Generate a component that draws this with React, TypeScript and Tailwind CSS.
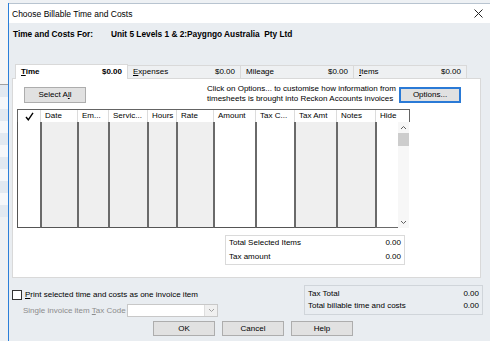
import React from "react";

const cols = [
  { label: "", w: 23, gray: false },
  { label: "Date", w: 37, gray: true },
  { label: "Em...", w: 31, gray: true },
  { label: "Servic...", w: 39, gray: true },
  { label: "Hours", w: 29, gray: true },
  { label: "Rate", w: 37, gray: true },
  { label: "Amount", w: 42, gray: false },
  { label: "Tax C...", w: 39, gray: false },
  { label: "Tax Amt", w: 42, gray: true },
  { label: "Notes", w: 39, gray: true },
  { label: "Hide", w: 34, gray: false },
];

function Check() {
  return (
    <svg width="9" height="9" viewBox="0 0 9 9">
      <path d="M1 5 L3.3 7.8 L8 0.8" fill="none" stroke="#000" strokeWidth="1.4" />
    </svg>
  );
}

function Chevron({ up, color = "#606060" }: { up?: boolean; color?: string }) {
  return (
    <svg width="7" height="5" viewBox="0 0 7 5">
      <path d={up ? "M1 4 L3.5 1.5 L6 4" : "M1 1 L3.5 3.5 L6 1"} fill="none" stroke={color} strokeWidth="1" />
    </svg>
  );
}

function Btn({ children, w, focus }: { children: React.ReactNode; w: string; focus?: boolean }) {
  return (
    <div
      className={`${w} h-[16px] flex items-center justify-center bg-[#e1e1e1] border ${
        focus ? "border-[#2a7ad6] shadow-[inset_0_0_0_1px_#2a7ad6]" : "border-[#adadad]"
      }`}
    >
      {children}
    </div>
  );
}

function Tab({ name, u, rest, active }: { name?: string; u: string; rest: string; active?: boolean }) {
  return (
    <div
      className={`flex items-center justify-between px-[5px] border border-b-0 ${
        active
          ? "w-[113px] h-[15px] bg-white border-[#d9d9d9] font-bold relative z-10 -mb-px pb-px"
          : "w-[114px] h-[13px] bg-[#eef0f2] border-[#d9d9d9] -ml-px"
      }`}
    >
      <span>
        <span className="underline">{u}</span>
        {rest}
      </span>
      <span>{name ?? "$0.00"}</span>
    </div>
  );
}

export default function App() {
  return (
    <div className="w-[490px] h-[341px] flex overflow-hidden bg-[#eef1f4] text-[8px] leading-[10px] text-black font-['Liberation_Sans',Arial,sans-serif]">
      {/* window behind */}
      <div className="w-[8px] shrink-0 flex flex-col">
        <div className="h-[85px] bg-[#f6f6f6] border-b border-[#a0a0a0]" />
        {Array.from({ length: 11 }).map((_, i) => (
          <div key={i} className={`h-[12px] ${i % 2 ? "bg-[#f5f7fa]" : "bg-[#e2e9f1]"}`} />
        ))}
      </div>

      {/* dialog */}
      <div className="flex-1 mt-[3px] flex flex-col border-l border-[#2b7fd9]">
        <div className="h-[20px] bg-white border-t border-[#b8c4d0] flex items-center justify-between pl-[3px] pr-[7px]">
          <span className="text-[8.5px]">Choose Billable Time and Costs</span>
          <svg width="9" height="9" viewBox="0 0 9 9">
            <path d="M0.5 0.5 L8.5 8.5 M8.5 0.5 L0.5 8.5" stroke="#222" strokeWidth="1" />
          </svg>
        </div>

        <div className="flex-1 bg-[#e9edf1] flex flex-col">
          <div className="flex h-[10px] mt-[6px] pl-[4px] font-bold text-[8.3px]">
            <span className="w-[98px]">Time and Costs For:</span>
            <span className="whitespace-pre">Unit 5 Levels 1 &amp; 2:Paygngo Australia  Pty Ltd</span>
          </div>

          {/* tabs */}
          <div className="flex items-end h-[15px] mt-[24px] pl-[6px]">
            <Tab u="T" rest="ime" active />
            <Tab u="E" rest="xpenses" />
            <Tab u="" rest="Mileage" />
            <Tab u="I" rest="tems" />
          </div>

          {/* panel */}
          <div className="ml-[3px] w-[469px] h-[200px] bg-white border border-[#d9d9d9] flex flex-col">
            <div className="flex h-[30px] items-start">
              <div className="ml-[11px] mt-[8px]">
                <Btn w="w-[62px]">
                  <span>
                    Select A<span className="underline">l</span>l
                  </span>
                </Btn>
              </div>
              <div className="ml-[121px] mt-[5px] w-[188px] whitespace-nowrap">
                <div>Click on Options... to customise how information from</div>
                <div>timesheets is brought into Reckon Accounts invoices</div>
              </div>
              <div className="ml-[4px] mt-[8px]">
                <Btn w="w-[62px]" focus>
                  Options...
                </Btn>
              </div>
            </div>

            {/* table */}
            <div className="ml-[4px] w-[393px] flex flex-col">
              <div className="flex h-[13px] bg-white border-t border-r border-[#646464]">
                {cols.map((c, i) => (
                  <div
                    key={i}
                    style={{ width: c.w }}
                    className={`shrink-0 flex items-center ${
                      i === 0 ? "border-l border-[#646464] justify-center" : "border-l border-[#dcdcdc] pl-[4px]"
                    }`}
                  >
                    {i === 0 ? <Check /> : <span className="whitespace-nowrap">{c.label}</span>}
                  </div>
                ))}
              </div>
              <div className="flex h-[106px]">
                {cols.map((c, i) =>
                  i === cols.length - 1 ? (
                    <div key={i} style={{ width: c.w }} className="shrink-0 flex">
                      <div className="w-[23px] bg-white border-l-2 border-b border-[#6a6a6a]" />
                      <div className="w-[11px] bg-[#f7f7f7] flex flex-col items-center justify-between pt-[3px] pb-[3px]">
                        <div className="flex flex-col items-center w-full">
                          <Chevron up />
                          <div className="mt-[3px] w-full h-[13px] bg-[#cdcdcd]" />
                        </div>
                        <Chevron />
                      </div>
                    </div>
                  ) : (
                    <div
                      key={i}
                      style={{ width: c.w }}
                      className={`shrink-0 border-b border-[#555] ${i === 0 ? "border-l" : "border-l-2 border-l-[#6a6a6a]"} ${
                        c.gray ? "bg-[#efefef]" : "bg-white"
                      }`}
                    />
                  )
                )}
              </div>
            </div>

            {/* totals */}
            <div className="ml-[212px] mt-[7px] w-[180px] h-[30px] border border-[#dadada] bg-white flex flex-col justify-center px-[3px]">
              <div className="flex justify-between h-[14px] items-center">
                <span>Total Selected Items</span>
                <span>0.00</span>
              </div>
              <div className="flex justify-between h-[14px] items-center">
                <span>Tax amount</span>
                <span>0.00</span>
              </div>
            </div>
          </div>

          {/* bottom */}
          <div className="flex h-[42px]">
            <div className="flex flex-col pl-[3px]">
              <div className="flex items-center h-[10px] mt-[12px]">
                <div className="w-[10px] h-[10px] border border-[#333] bg-white" />
                <span className="ml-[3px]">
                  <span className="underline">P</span>rint selected time and costs as one invoice item
                </span>
              </div>
              <div className="flex items-center h-[13px] mt-[4px]">
                <span className="w-[115px] pl-[11px] text-[#8c8c8c] whitespace-nowrap">
                  Single invoice item <span className="underline">T</span>ax Code
                </span>
                <div className="w-[91px] h-[13px] flex border border-[#c8c8c8] bg-white">
                  <div className="flex-1" />
                  <div className="w-[13px] bg-[#f0f0f0] border-l border-[#dedede] flex items-center justify-center">
                    <Chevron color="#a0a0a0" />
                  </div>
                </div>
              </div>
            </div>
            <div className="ml-auto mr-[7px] mt-[7px] w-[179px] h-[30px] border border-[#d0d5da] flex flex-col justify-center px-[3px]">
              <div className="flex justify-between h-[12px] items-center">
                <span>Tax Total</span>
                <span>0.00</span>
              </div>
              <div className="flex justify-between h-[12px] items-center">
                <span>Total billable time and costs</span>
                <span>0.00</span>
              </div>
            </div>
          </div>
          <div className="flex pl-[144px] gap-[7px] mt-[1px]">
            <div className="h-[15px] w-[62px] flex items-center justify-center bg-[#e1e1e1] border border-[#adadad]">OK</div>
            <div className="h-[15px] w-[62px] flex items-center justify-center bg-[#e1e1e1] border border-[#adadad]">Cancel</div>
            <div className="h-[15px] w-[62px] flex items-center justify-center bg-[#e1e1e1] border border-[#adadad]">Help</div>
          </div>
        </div>
      </div>
    </div>
  );
}
